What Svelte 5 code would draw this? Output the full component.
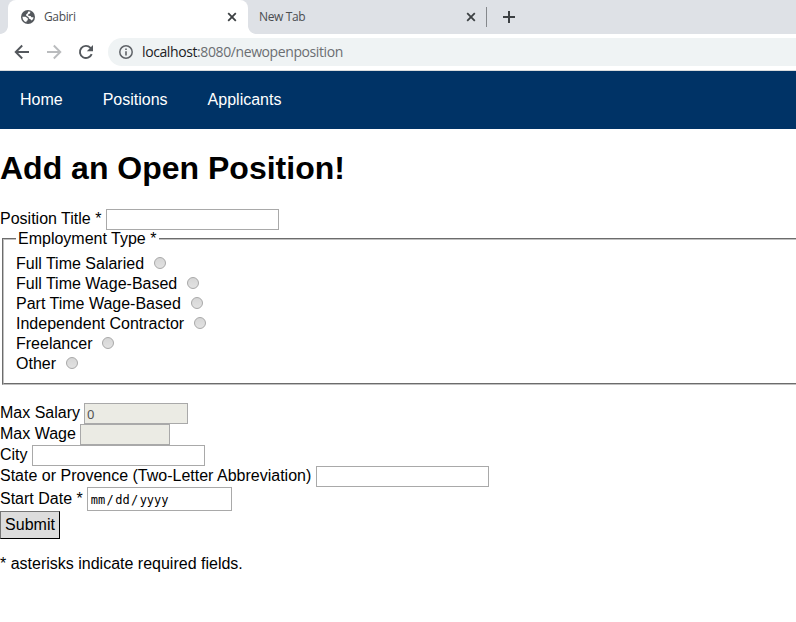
<script>
  const links = ['Home', 'Positions', 'Applicants'];
  const types = [
    'Full Time Salaried',
    'Full Time Wage-Based',
    'Part Time Wage-Based',
    'Independent Contractor',
    'Freelancer',
    'Other'
  ];
  let chosen = $state('');
</script>

<div class="window">
  <div class="tabs">
    <div class="tab active">
      <svg class="globe" width="14" height="14" viewBox="0 0 14 14">
        <circle cx="7" cy="7" r="7" fill="#54585d" />
        <path d="M7.2 1.5 9.4 1.8 9 3.4 7.3 4.3 7.2 5.8 9.6 6.1 10.4 7.3 12.5 7.3 12.1 9 10.6 10.6 9.4 9.2 7.9 8.6 7.6 7.2 5.2 5.7 5.1 4.4 6.6 3.2ZM1.4 6.8 4.6 6.8 6.9 8.6 6.7 10.2 5.5 10.9 5.4 12.3 3.3 11.2 1.9 9.3Z" fill="#fff" />
      </svg>
      <span class="name">Gabiri</span>
      <svg class="close" width="10" height="10" viewBox="0 0 10 10"><path d="m1.2 1.2 7.6 7.6m0-7.6-7.6 7.6" /></svg>
      <i class="foot left"></i><i class="foot right"></i>
    </div>
    <div class="tab idle">
      <span class="name">New Tab</span>
      <svg class="close" width="10" height="10" viewBox="0 0 10 10"><path d="m1.2 1.2 7.6 7.6m0-7.6-7.6 7.6" /></svg>
    </div>
    <span class="divider"></span>
    <svg class="plus" width="12" height="12" viewBox="0 0 12 12"><path d="M6 0v12M0 6h12" /></svg>
  </div>

  <div class="toolbar">
    <svg width="16" height="16" viewBox="0 0 16 16"><path d="M15 8H2M8.2 1.5 1.7 8l6.5 6.5" fill="none" stroke="#54585d" stroke-width="1.9" /></svg>
    <svg width="16" height="16" viewBox="0 0 16 16"><path d="M1 8h13M7.8 1.5 14.3 8l-6.5 6.5" fill="none" stroke="#babcbe" stroke-width="1.9" /></svg>
    <svg width="16" height="16" viewBox="0 0 16 16">
      <path d="M13.7 10.2A6.1 6.1 0 1 1 12.5 3.8L14 5.3" fill="none" stroke="#54585d" stroke-width="1.9" />
      <path d="M15 1v6.2H8.8Z" fill="#54585d" />
    </svg>
    <div class="address">
      <svg width="14" height="14" viewBox="0 0 14 14">
        <circle cx="7" cy="7" r="6.2" fill="none" stroke="#5f6368" stroke-width="1.5" />
        <path d="M7 6.2v4.3M7 3.4v1.6" stroke="#5f6368" stroke-width="1.6" />
      </svg>
      <span class="url"><b>localhost</b>:8080/newopenposition</span>
    </div>
  </div>

  <nav>
    {#each links as link}<a href="#{link}">{link}</a>{/each}
  </nav>

  <main>
    <h1>Add an Open Position!</h1>
    <label class="row wide">Position Title * <input type="text" /></label>
    <fieldset>
      <legend>Employment Type *</legend>
      {#each types as type}
        <label class="choice">{type}<input type="radio" name="type" value={type} bind:group={chosen} /></label>
      {/each}
    </fieldset>
    <label class="row">Max Salary <input class="salary" type="text" value="0" disabled /></label>
    <label class="row">Max Wage <input class="wage" type="text" disabled /></label>
    <label class="row">City <input type="text" /></label>
    <label class="row wide">State or Provence (Two-Letter Abbreviation) <input type="text" /></label>
    <div class="row date">Start Date * <span class="datebox"><span>mm</span><span class="slash">/</span><span>dd</span><span class="slash">/</span><span>yyyy</span></span></div>
    <button type="submit">Submit</button>
    <p>* asterisks indicate required fields.</p>
  </main>
</div>

<style>
  :global(body) { margin: 0; background: #fff; overflow: hidden; }
  .window { width: 796px; height: 622px; overflow: hidden; background: #fff; color: #000; font: 16px/18px "Liberation Sans", Arial, sans-serif; }
  svg { display: block; flex: none; }
  .tabs { display: flex; align-items: center; height: 34px; padding-left: 8px; background: #dee1e6; font: 12px/16px "Open Sans", "Noto Sans", sans-serif; color: #4a4d51; }
  .tab { position: relative; display: flex; align-items: center; box-sizing: border-box; height: 34px; }
  .active { width: 240px; padding: 0 11px 0 13px; background: #fff; border-radius: 8px 8px 0 0; }
  .idle { width: 238px; padding: 0 10px 0 11px; }
  .name { flex: 1; letter-spacing: -0.35px; }
  .globe { margin-right: 9px; }
  .close path { fill: none; stroke: #3c4043; stroke-width: 1.8; }
  .foot { position: absolute; bottom: 0; width: 8px; height: 8px; }
  .left { left: -8px; background: radial-gradient(circle at 0 0, #dee1e6 7.5px, #fff 8.2px); }
  .right { right: -8px; background: radial-gradient(circle at 100% 0, #dee1e6 7.5px, #fff 8.2px); }
  .divider { width: 1px; height: 20px; background: #85888c; }
  .plus { margin-left: 16px; }
  .plus path { stroke: #3c4043; stroke-width: 2; }
  .toolbar { display: flex; align-items: center; gap: 16px; height: 36px; padding-left: 14px; border-bottom: 1px solid #d9dcdd; }
  .address { display: flex; align-items: center; flex: 1; height: 28px; margin-left: -2px; padding-left: 11px; border-radius: 14px 0 0 14px; background: #eff3f4; }
  .url { margin-left: 9px; font: 14px/20px "Open Sans", "Noto Sans", sans-serif; letter-spacing: -0.4px; color: #6b6e72; white-space: nowrap; }
  .url b { font-weight: 400; color: #202124; }
  nav { display: flex; align-items: center; gap: 40px; height: 58px; padding-left: 20px; background: #003366; }
  nav a { color: #fff; text-decoration: none; }
  h1 { margin: 21px 0 22px; font-size: 32px; line-height: 37px; }
  .row { display: flex; align-items: flex-start; gap: 4px; height: 21px; line-height: 19px; white-space: nowrap; }
  .wide { gap: 5px; }
  input[type="text"] { box-sizing: border-box; width: 173px; height: 21px; margin: 0; padding: 1px 2px; border: 1px solid #a9a9a9; border-radius: 0; background: #fff; font: 13px "Liberation Sans", Arial, sans-serif; }
  input:disabled { background: #ebebe4 !important; color: #545454; }
  input.salary { width: 104px; font: 13px "Noto Sans", sans-serif; }
  input.wage { width: 90px; }
  fieldset { box-sizing: border-box; width: 830px; height: 155px; margin: 0 2px 18px; padding: 6px 12px 0; border: 2px groove #c0c0c0; }
  legend { padding: 0 3px 0 2px; height: 18px; line-height: 18px; }
  .choice { display: flex; align-items: center; height: 20px; }
  input[type="radio"] { appearance: none; box-sizing: border-box; width: 12px; height: 12px; margin: 0 0 3px 9.8px; border: 1px solid #a8a8a8; border-radius: 50%; background: linear-gradient(#d6d6d6, #e2e2e2); }
  .date { height: 24px; line-height: 24px; }
  .datebox { display: flex; align-items: center; box-sizing: border-box; width: 145px; height: 24px; padding: 2px 0 0 3px; border: 1px solid #a9a9a9; font: 12px/16px "DejaVu Sans Mono", monospace; }
  .slash { padding: 0 1.4px; }
  button { display: block; box-sizing: border-box; width: 60px; height: 28px; margin: 0; padding: 0; border: 1px solid #000; border-top-color: #767676; border-left-color: #767676; border-radius: 0; background: #ddd; color: #000; font: 16px/18px "Liberation Sans", Arial, sans-serif; }
  p { margin: 16px 0; }
</style>
